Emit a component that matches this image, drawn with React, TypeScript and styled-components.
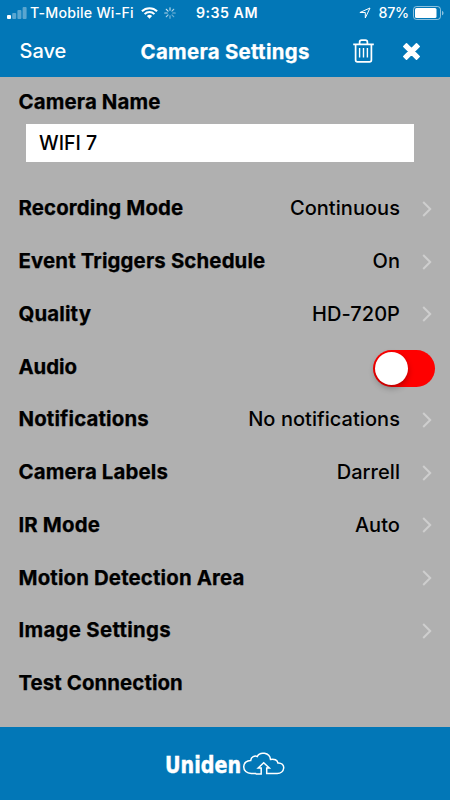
import React from 'react';
import styled, { createGlobalStyle } from 'styled-components';

const GlobalStyle = createGlobalStyle`
  * { box-sizing: border-box; }
  body { margin: 0; font-family: Inter, "Liberation Sans", sans-serif; }
`;

const Screen = styled.div`
  width: 450px;
  height: 800px;
  display: flex;
  flex-direction: column;
  overflow: hidden;
  background: #b0b0b0;
  color: #000;
`;

const Header = styled.header`
  height: 77px;
  flex: none;
  background: #0277b7;
  color: #fff;
`;

const StatusBar = styled.div`
  height: 25px;
  display: grid;
  grid-template-columns: 1fr auto 1fr;
  align-items: center;
  padding: 0 6px 0 7px;
  font-size: 14.2px;
  font-weight: 500;
  line-height: 25px;
`;

const StatusGroup = styled.div<{ $end?: boolean }>`
  display: flex;
  align-items: center;
  justify-content: ${(p) => (p.$end ? 'flex-end' : 'flex-start')};
  white-space: nowrap;
  svg { flex: none; }
`;

const Carrier = styled.span`
  margin: 0 7px 0 3px;
  letter-spacing: 0.22px;
`;

const Clock = styled.span`
  padding-left: 3px;
  font-weight: 600;
  letter-spacing: 0.5px;
`;

const Percent = styled.span`
  margin: 0 4px 0 7px;
  letter-spacing: -0.2px;
`;

const NavBar = styled.div`
  height: 52px;
  display: grid;
  grid-template-columns: 140px 1fr 140px;
  align-items: center;
  line-height: 52px;
`;

const Save = styled.span`
  padding-left: 19.5px;
  font-size: 20px;
  font-weight: 450;
`;

const Title = styled.h1`
  margin: 0;
  padding-left: 0.5px;
  font-size: 20.4px;
  font-weight: 700;
  line-height: 51px;
  letter-spacing: 0.3px;
  -webkit-text-stroke: 0.25px currentColor;
  white-space: nowrap;
`;

const Actions = styled.div`
  display: flex;
  align-items: center;
  padding-left: 43px;
  gap: 28px;
`;

const Form = styled.main`
  flex: 1;
  padding: 13px 15px 0 18.5px;
`;

const Label = styled.span<{ $track?: number }>`
  font-size: 20.4px;
  font-weight: 700;
  line-height: 24px;
  letter-spacing: ${(p) => p.$track ?? 0.14}px;
  -webkit-text-stroke: 0.25px currentColor;
  white-space: nowrap;
`;

const NameInput = styled.input`
  display: block;
  width: 388px;
  height: 38px;
  margin: 10px 0 20.1px 7.5px;
  padding: 0 13px;
  border: 0;
  border-radius: 0;
  outline: 0;
  background: #fff;
  color: #000;
  font: 450 19.6px Inter, "Liberation Sans", sans-serif;
`;

const Row = styled.div`
  height: 52.75px;
  display: flex;
  align-items: center;
  justify-content: space-between;
`;

const RowEnd = styled.div`
  display: flex;
  align-items: center;
  gap: 22px;
  padding-right: 3px;

  svg { margin-top: 1px; }
`;

const Value = styled.span`
  font-size: 20px;
  font-weight: 450;
  line-height: 24px;
  letter-spacing: 0.05px;
`;

const Toggle = styled.button`
  width: 62px;
  height: 37px;
  margin-top: 3px;
  padding: 2px;
  border: 0;
  border-radius: 19px;
  background: #fe0000;
  display: flex;
`;

const Knob = styled.span`
  width: 33px;
  height: 33px;
  border-radius: 50%;
  background: #fff;
  box-shadow: 0 3px 6px rgba(0, 0, 0, 0.3);
`;

const Footer = styled.footer`
  height: 73px;
  flex: none;
  display: flex;
  justify-content: center;
  align-items: center;
  background: #0277b7;
`;

const Signal = () => (
  <svg width="20" height="12" viewBox="0 0 20 12" fill="#fff">
    <rect x="0" y="8" width="4" height="4" rx="1" />
    <g opacity=".35">
      <rect x="5.2" y="6" width="4" height="6" rx="1" />
      <rect x="10.4" y="3" width="4" height="9" rx="1" />
      <rect x="15.6" y="0" width="4" height="12" rx="1" />
    </g>
  </svg>
);

const Wifi = () => (
  <svg width="17" height="12" viewBox="0 0 17 12" fill="none" stroke="#fff" strokeWidth="2">
    <path d="M.9 4.3a10.8 10.8 0 0 1 15.2 0M3.6 7.1a7 7 0 0 1 9.8 0" />
    <path d="M8.5 11.7 5.9 9.1a3.7 3.7 0 0 1 5.2 0Z" fill="#fff" stroke="none" />
  </svg>
);

const SpinnerSvg = styled.svg`
  margin-left: 6px;
`;

const SPOKES = [1, 0.8, 0.6, 0.5, 0.65, 0.8, 0.9, 1];

const Spinner = () => (
  <SpinnerSvg width="12" height="12" viewBox="-6 -6 12 12" stroke="#fff" strokeWidth="1.1" strokeLinecap="round">
    {SPOKES.map((opacity, i) => (
      <path key={i} d="M0-2.7V-5.3" transform={`rotate(${i * 45})`} opacity={opacity * 0.8} />
    ))}
  </SpinnerSvg>
);

const Location = () => (
  <svg width="12" height="12" viewBox="0 0 12 12" fill="none" stroke="#fff" strokeWidth="1" strokeLinejoin="round">
    <path d="M11 1 .9 5.5H6.3V11Z" />
  </svg>
);

const Battery = () => (
  <svg width="31" height="14" viewBox="0 0 31 14">
    <rect x=".5" y=".5" width="27" height="13" rx="3" fill="none" stroke="#fff" strokeOpacity=".55" />
    <rect x="2" y="2" width="21.5" height="10" rx="1.5" fill="#fff" />
    <path d="M29 4.7v4.6c2-.8 2-3.8 0-4.6Z" fill="#fff" opacity=".55" />
  </svg>
);

const Trash = () => (
  <svg width="21" height="24" viewBox="0 0 21 24" fill="none" stroke="#fff" strokeWidth="1.7">
    <path d="M.2 5.3H20.8M6.6 5V3.2Q6.6 1.2 8.6 1.2H12.4Q14.4 1.2 14.4 3.2V5M2.6 5.3V21Q2.6 22.8 4.4 22.8H16.6Q18.4 22.8 18.4 21V5.3" />
    <path d="M6.6 9V18.5M10.5 9V18.5M14.4 9V18.5" strokeWidth="1.4" />
  </svg>
);

const Close = () => (
  <svg width="19" height="19" viewBox="0 0 19 19" fill="#fff" stroke="#fff" strokeWidth="1.6" strokeLinejoin="round">
    <path d="M4.5 1.8 9.5 6.8 14.5 1.8 17.2 4.5 12.2 9.5 17.2 14.5 14.5 17.2 9.5 12.2 4.5 17.2 1.8 14.5 6.8 9.5 1.8 4.5Z" />
  </svg>
);

const Chevron = () => (
  <svg width="10" height="16" viewBox="0 0 10 16" fill="none" stroke="#cecece" strokeWidth="2">
    <path d="m1.2 1 7 7-7 7" />
  </svg>
);

const Logo = () => (
  <svg width="120" height="28" viewBox="0 0 120 28" fill="#fff">
    <text
      x="0"
      y="22.5"
      fontFamily="DejaVu Sans Condensed, DejaVu Sans, sans-serif"
      fontSize="22.5"
      fontWeight="700"
      textLength="76"
      lengthAdjust="spacingAndGlyphs"
      stroke="#fff"
      strokeWidth=".4"
    >
      Uniden
    </text>
    <path
      d="M91.5 21.5H86.5C82 21.5 79 18.5 79 14.8C79 11 82.2 8.4 86 8.5C86.3 4.8 90.2 3.4 92.6 4.5C95-.6 105 .2 105.8 7.4C109.5 6.6 112.7 8 113.2 11C117 10.8 119.2 13 119 16C118.7 19.3 116 21.5 112.5 21.5H102V16H104.6L99 10.8L93.5 16H96.5V22H91"
      transform="translate(-.3 2)"
      fill="none"
      stroke="#fff"
      strokeWidth="1.5"
    />
  </svg>
);

type Setting = { label: string; value?: string; kind?: 'toggle' | 'plain'; track?: number };

const SETTINGS: Setting[] = [
  { label: 'Recording Mode', value: 'Continuous' },
  { label: 'Event Triggers Schedule', value: 'On' },
  { label: 'Quality', value: 'HD-720P' },
  { label: 'Audio', kind: 'toggle', track: -0.1 },
  { label: 'Notifications', value: 'No notifications' },
  { label: 'Camera Labels', value: 'Darrell' },
  { label: 'IR Mode', value: 'Auto' },
  { label: 'Motion Detection Area' },
  { label: 'Image Settings', track: 0.3 },
  { label: 'Test Connection', kind: 'plain', track: 0.08 },
];

export default function App() {
  return (
    <>
      <GlobalStyle />
      <Screen>
        <Header>
          <StatusBar>
            <StatusGroup>
              <Signal />
              <Carrier>T-Mobile Wi-Fi</Carrier>
              <Wifi />
              <Spinner />
            </StatusGroup>
            <Clock>9:35 AM</Clock>
            <StatusGroup $end>
              <Location />
              <Percent>87%</Percent>
              <Battery />
            </StatusGroup>
          </StatusBar>
          <NavBar>
            <Save>Save</Save>
            <Title>Camera Settings</Title>
            <Actions>
              <Trash />
              <Close />
            </Actions>
          </NavBar>
        </Header>
        <Form>
          <Label as="label" htmlFor="camera-name">Camera Name</Label>
          <NameInput id="camera-name" defaultValue="WIFI 7" />
          {SETTINGS.map((s) => (
            <Row key={s.label}>
              <Label $track={s.track}>{s.label}</Label>
              {s.kind === 'toggle' && <Toggle aria-label={s.label}><Knob /></Toggle>}
              {!s.kind && (
                <RowEnd>
                  {s.value && <Value>{s.value}</Value>}
                  <Chevron />
                </RowEnd>
              )}
            </Row>
          ))}
        </Form>
        <Footer><Logo /></Footer>
      </Screen>
    </>
  );
}
